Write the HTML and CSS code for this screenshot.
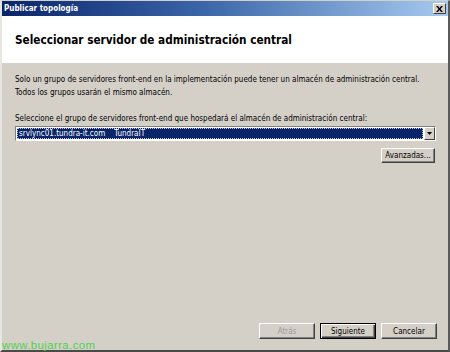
FILE: index.html
```html
<!DOCTYPE html>
<html lang="es">
<head>
  <meta charset="UTF-8" />
  <title>Publicar topología</title>
  <link rel="stylesheet" href="styles.css">
</head>
<body>

  <div class="window">

    <!-- Title bar -->
    <div class="titlebar">
      <span class="title">Publicar topología</span>
      <span class="close">
        <svg width="7" height="6" viewBox="0 0 7 6"><path d="M0 0h2l1.5 2 1.5-2h2l-2.5 3 2.5 3h-2l-1.5-2-1.5 2h-2l2.5-3z" fill="#000"/></svg>
      </span>
    </div>

    <!-- Header -->
    <div class="header">
      <h1>Seleccionar servidor de administración central</h1>
    </div>

    <!-- Body -->
    <div class="content">
      <p class="intro">Solo un grupo de servidores front-end en la implementación puede tener un almacén de administración central.<br>Todos los grupos usarán el mismo almacén.</p>

      <label class="field-label">Seleccione el grupo de servidores front-end que hospedará el almacén de administración central:</label>
      <div class="combo">
        <div class="combo-value"><span class="sel">srvlync01.tundra-it.com&nbsp;&nbsp;&nbsp;&nbsp;TundraIT</span></div>
        <div class="combo-btn">
          <svg width="5" height="3" viewBox="0 0 5 3"><path d="M0 0h5L2.5 3z" fill="#000"/></svg>
        </div>
      </div>
      <div class="adv-row">
        <button class="btn adv">Avanzadas...</button>
      </div>
    </div>

    <!-- Footer -->
    <div class="footer">
      <button class="btn" disabled>Atrás</button>
      <button class="btn default">Siguiente</button>
      <button class="btn">Cancelar</button>
    </div>

    <div class="watermark">www.bujarra.com</div>
  </div>

</body>
</html>
```

FILE: styles.css
```css
html, body {
  margin: 0;
  padding: 0;
}
body {
  font-family: 'DejaVu Sans Condensed', 'DejaVu Sans', sans-serif;
  font-size: 8px;
  color: #000;
  background: #d4d0c8;
}
.window {
  position: relative;
  width: 450px;
  height: 352px;
  box-sizing: border-box;
  display: flex;
  flex-direction: column;
  background: #d4d0c8;
  border-top: 1px solid #d4d0c8;
  border-left: 2px solid #e8e6e0;
  border-right: 2px solid #5a5a5a;
  border-bottom: 2px solid #4a4a4a;
}
.titlebar {
  height: 15px;
  display: flex;
  align-items: center;
  justify-content: space-between;
  padding: 0 2px 0 2px;
  background: linear-gradient(to right, #0a246a 0%, #3a66a8 45%, #a6caf0 100%);
}
.title {
  color: #fff;
  font-weight: bold;
  font-size: 8px;
}
.close {
  width: 11px;
  height: 9px;
  display: flex;
  align-items: center;
  justify-content: center;
  background: #d4d0c8;
  border-top: 1px solid #fff;
  border-left: 1px solid #fff;
  border-right: 1px solid #404040;
  border-bottom: 1px solid #404040;
}
.header {
  height: 47px;
  background: #fff;
  display: flex;
  align-items: center;
  padding-left: 13px;
}
.header h1 {
  margin: 0;
  font-family: 'DejaVu Sans Condensed', 'DejaVu Sans', sans-serif;
  font-size: 11.7px;
  font-weight: bold;
  padding-top: 1px;
}
.content {
  padding: 10px 12px 0 13px;
}
.intro {
  margin: 0;
  line-height: 13px;
}
.field-label {
  display: block;
  margin-top: 13px;
  line-height: 13px;
}
.combo {
  margin-top: 1px;
  height: 15px;
  display: flex;
  box-sizing: border-box;
  border-top: 1px solid #808080;
  border-left: 1px solid #808080;
  border-right: 1px solid #fff;
  border-bottom: 1px solid #fff;
  background: #fff;
}
.combo-value {
  flex: 1;
  padding: 1px;
  display: flex;
}
.sel {
  flex: 1;
  background: #0a246a;
  color: #fff;
  line-height: 11px;
  padding-left: 2px;
  outline: 1px dotted #c8c8c8;
  outline-offset: -1px;
}
.combo-btn {
  width: 11px;
  display: flex;
  align-items: center;
  justify-content: center;
  background: #d4d0c8;
  border-top: 1px solid #fff;
  border-left: 1px solid #fff;
  border-right: 1px solid #404040;
  border-bottom: 1px solid #404040;
  box-sizing: border-box;
}
.adv-row {
  display: flex;
  justify-content: flex-end;
  margin-top: 7px;
  padding-right: 1px;
}
.btn {
  font-family: 'DejaVu Sans Condensed', 'DejaVu Sans', sans-serif;
  font-size: 8px;
  color: #000;
  background: #d4d0c8;
  height: 16px;
  width: 56px;
  padding: 0;
  box-sizing: border-box;
  border-top: 1px solid #fff;
  border-left: 1px solid #fff;
  border-right: 1px solid #404040;
  border-bottom: 1px solid #404040;
  box-shadow: inset -1px -1px 0 #808080;
}
.btn.adv {
  width: 54px;
  height: 15px;
}
.btn:disabled {
  color: #9c9a94;
}
.btn.default {
  border: 1px solid #000;
  box-shadow: inset 1px 1px 0 #fff, inset -1px -1px 0 #404040, inset -2px -2px 0 #808080;
}
.footer {
  margin-top: auto;
  display: flex;
  justify-content: flex-end;
  gap: 5px;
  padding: 0 11px 11px 0;
}
.watermark {
  position: absolute;
  left: 0;
  bottom: -1px;
  font-family: 'Liberation Sans', sans-serif;
  font-size: 11.4px;
  letter-spacing: 0.4px;
  color: #4fd04f;
}
```
